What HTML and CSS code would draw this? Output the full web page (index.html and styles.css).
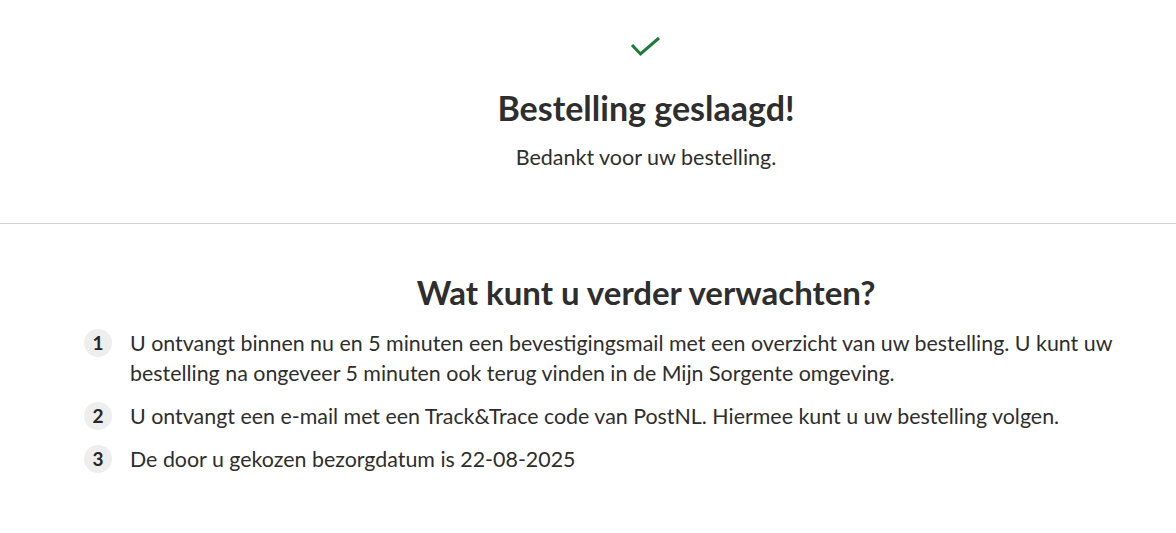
FILE: index.html
```html
<!DOCTYPE html>
<html lang="nl">
<head>
  <meta charset="UTF-8" />
  <meta name="viewport" content="width=device-width, initial-scale=1.0">
  <title>Bestelling geslaagd</title>
  <link rel="stylesheet" href="styles.css">
</head>

<body>
  <div class="bevestiging">
    <div class="vinkje">
      <svg width="32" height="24" viewBox="0 0 32 24" aria-hidden="true">
        <path d="M2 9 L10.5 18 L29 2" fill="none" stroke="#1b7d3a" stroke-width="3" />
      </svg>
    </div>
    <h1 class="titulo">Bestelling geslaagd!</h1>
    <p class="subtitel">Bedankt voor uw bestelling.</p>
  </div>

  <div class="verwachting">
    <h2 class="titulo">Wat kunt u verder verwachten?</h2>
    <ol class="stappen">
      <li>
        <span class="nummer">1</span>
        <span class="tekst">U ontvangt binnen nu en 5 minuten een bevestigingsmail met een overzicht van uw bestelling. U kunt uw bestelling na ongeveer 5 minuten ook terug vinden in de Mijn Sorgente omgeving.</span>
      </li>
      <li>
        <span class="nummer">2</span>
        <span class="tekst">U ontvangt een e-mail met een Track&amp;Trace code van PostNL. Hiermee kunt u uw bestelling volgen.</span>
      </li>
      <li>
        <span class="nummer">3</span>
        <span class="tekst">De door u gekozen bezorgdatum is 22-08-2025</span>
      </li>
    </ol>
  </div>
</body>
</html>
```

FILE: styles.css
```css
body {
  background-color: white;
  font-family: 'Lato', sans-serif;
  color: #2e2e2e;
  margin: 0;
  padding: 0;
}

.bevestiging {
  padding: 36px 0 53px 116px;
  text-align: center;
  border-bottom: 1px solid #d5d0d2;
}

.vinkje {
  height: 30px;
}

.titulo {
  margin: 0;
  font-size: 34px;
  font-weight: 700;
  line-height: 40px;
}

.bevestiging .titulo {
  margin-top: 22px;
}

.subtitel {
  margin: 16px 0 0;
  font-size: 21.5px;
}

.verwachting {
  padding: 48px 0 40px 116px;
}

.verwachting .titulo {
  text-align: center;
  font-size: 33px;
  margin-bottom: 16px;
}

.stappen {
  list-style: none;
  margin: 0 0 0 -32px;
  padding: 0 50px 0 0;
}

.stappen li {
  display: flex;
  gap: 18px;
  margin-bottom: 13px;
  font-size: 21.4px;
  line-height: 30px;
}

.nummer {
  flex: none;
  width: 28px;
  height: 28px;
  margin-top: 1px;
  border-radius: 50%;
  background-color: #eeeeee;
  text-align: center;
  line-height: 28px;
  font-weight: 700;
  font-size: 19px;
  color: #262626;
}
```
